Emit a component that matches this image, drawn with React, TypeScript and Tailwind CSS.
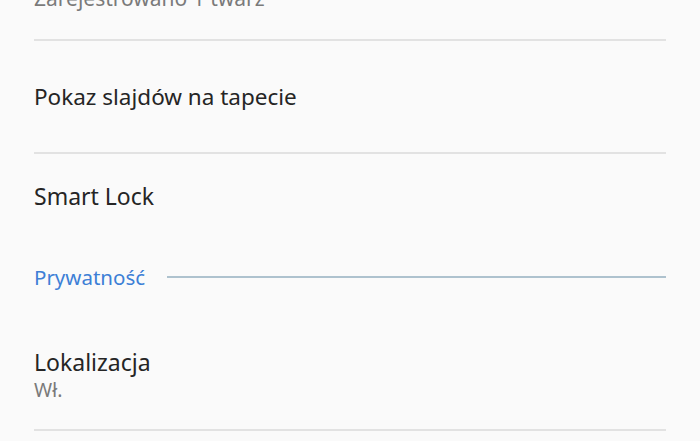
export default function App() {
  const font = { fontFamily: '"Noto Sans", "Open Sans", sans-serif' };
  return (
    <div className="w-[700px] h-[441px] overflow-hidden bg-[#fafafa]" style={font}>
      <div className="px-[34px] flex flex-col">
        <div className="h-[39px] flex items-end pb-[30px]">
          <span className="text-[21px] leading-none text-[#7a7a7a]">Zarejestrowano 1 twarz</span>
        </div>
        <div className="border-t-2 border-[#e2e2e2] h-[113px] flex items-center">
          <span className="text-[22.5px] text-[#252525]">Pokaz slajdów na tapecie</span>
        </div>
        <div className="border-t-2 border-[#e2e2e2] h-[86px] flex items-center">
          <span className="text-[23px] text-[#252525]">Smart Lock</span>
        </div>
        <div className="h-[76px] flex items-center gap-[22px] pt-[2px]">
          <span className="text-[20.5px] text-[#3d7fd6]">Prywatność</span>
          <div className="flex-1 h-[2px] bg-[#aec2ce]" />
        </div>
        <div className="h-[115px] flex flex-col justify-center pt-[6px]">
          <span className="text-[23px] leading-[30px] text-[#252525]">Lokalizacja</span>
          <span className="text-[19.5px] leading-[26px] text-[#7a7a7a]">Wł.</span>
        </div>
        <div className="border-t-2 border-[#e2e2e2]" />
      </div>
    </div>
  );
}
